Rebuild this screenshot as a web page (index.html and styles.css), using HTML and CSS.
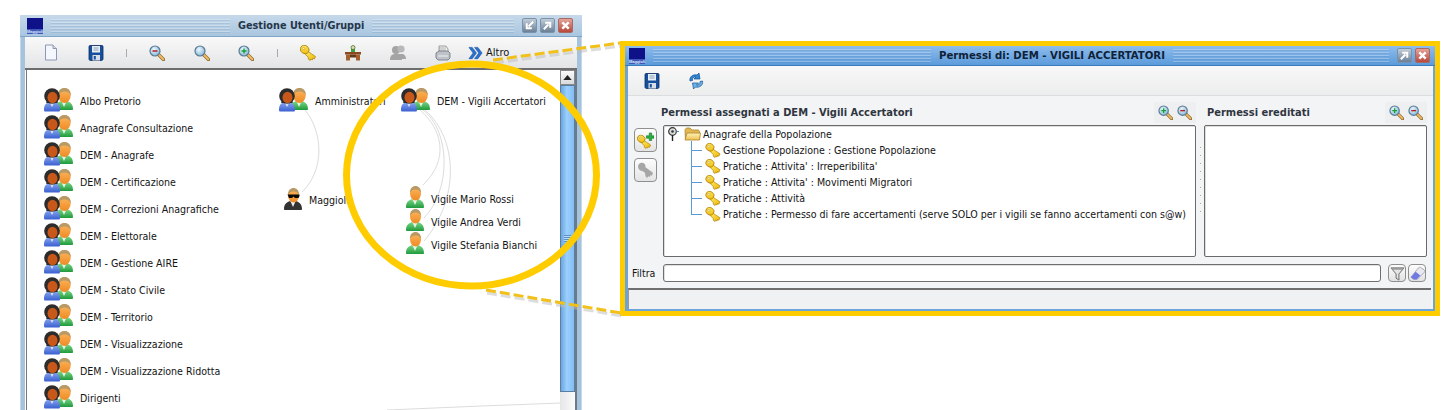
FILE: index.html
```html
<!DOCTYPE html>
<html lang="it">
<head>
<meta charset="utf-8">
<title>Gestione Utenti/Gruppi</title>
<link rel="stylesheet" href="styles.css">
</head>
<body>
<svg class="defs" width="0" height="0" aria-hidden="true">
  <defs>
    <linearGradient id="gGreen" x1="0" y1="0" x2="0" y2="1"><stop offset="0" stop-color="#7fd88a"/><stop offset="1" stop-color="#1f9a3c"/></linearGradient>
    <linearGradient id="gBlue" x1="0" y1="0" x2="0" y2="1"><stop offset="0" stop-color="#8aa8f0"/><stop offset="1" stop-color="#3a5fd0"/></linearGradient>
    <linearGradient id="gOrange" x1="0" y1="0" x2="0" y2="1"><stop offset="0" stop-color="#ffb860"/><stop offset="1" stop-color="#ee8a24"/></linearGradient>
    <linearGradient id="gGold" x1="0" y1="0" x2="1" y2="1"><stop offset="0" stop-color="#ffee70"/><stop offset="1" stop-color="#f0b400"/></linearGradient>
    <radialGradient id="gLens" cx=".4" cy=".35" r=".7"><stop offset="0" stop-color="#eef8ff"/><stop offset="1" stop-color="#7fb4d8"/></radialGradient>
    <linearGradient id="gFolder" x1="0" y1="0" x2="0" y2="1"><stop offset="0" stop-color="#fff2b8"/><stop offset="1" stop-color="#f0c050"/></linearGradient>

    <symbol id="user" viewBox="0 0 18 22">
      <path d="M0 21c0-5 3-7 6-8l3 3 3-3c3 1 6 3 6 8 0 .6-.4 1-1 1H1c-.6 0-1-.4-1-1z" fill="url(#gGreen)"/>
      <path d="M6.500 13.500 9 19l2.500-5.500L9 15z" fill="#e4f6e4"/>
      <ellipse cx="9.500" cy="7.500" rx="5.500" ry="7" fill="url(#gOrange)"/>
      <path d="M4 7C4 2 6.500 0 9.500 0S15 2 15 7c-1-2.500-3-3.500-5.500-3.500S5 4.500 4 7z" fill="#b79a66"/>
    </symbol>

    <symbol id="boss" viewBox="0 0 18 22">
      <path d="M0 21c0-5 3-7 6-8l3 3 3-3c3 1 6 3 6 8 0 .6-.4 1-1 1H1c-.6 0-1-.4-1-1z" fill="#333"/>
      <path d="M6.500 13.500 9 19l2.500-5.500L9 15z" fill="#eee"/>
      <ellipse cx="9.500" cy="7.500" rx="5.500" ry="7" fill="url(#gOrange)"/>
      <path d="M4 7C4 2 6.500 0 9.500 0S15 2 15 7c-1-2.500-3-3.500-5.500-3.500S5 4.500 4 7z" fill="#b79a66"/>
      <path d="M3.500 6.500h12v1.500l-1 2h-3.500L9.500 8.500 8 10H5z" fill="#0a0a0a"/>
    </symbol>

    <symbol id="group" viewBox="0 0 29 24">
      <g transform="translate(11 0)">
        <path d="M0 21c0-5 3-7 6-8l3 3 3-3c3 1 6 3 6 8 0 .6-.4 1-1 1H1c-.6 0-1-.4-1-1z" fill="url(#gGreen)"/>
        <path d="M6.500 13.500 9 19l2.500-5.500L9 15z" fill="#e4f6e4"/>
        <ellipse cx="9.500" cy="7.500" rx="6.200" ry="7.500" fill="url(#gOrange)"/>
        <path d="M3.300 7.500C3 2 6 0 9.500 0s6.500 2 6.200 7.500c-1-3-3.200-4-6.200-4s-5.200 1-6.200 4z" fill="#b79a66"/>
      </g>
      <path d="M0 22c0-5 2-7 5-8l3 2.500 3-2.500c3 1 5 3 5 8 0 1-.5 1.500-1.500 1.500h-13C.5 23.500 0 23 0 22z" fill="url(#gBlue)"/>
      <path d="M6 15l2 4 2-4-2 1.500z" fill="#dfe8ff"/>
      <circle cx="8" cy="8" r="7.800" fill="#2c2c2c"/>
      <path d="M2 15c1-1 .5-2 .5-3h11c0 1-.5 2 .5 3z" fill="#2c2c2c"/>
      <ellipse cx="8.500" cy="9.500" rx="5" ry="5.800" fill="#c8571a"/>
    </symbol>

    <symbol id="key" viewBox="0 0 16 16">
      <path d="M6.500 5.500 15.500 11.500l-1.200 2.500-1.500-.8-.4 1.700-1.700-.9-.5 1.500-1.800-1.300-.2-2L4.500 8.500z" fill="url(#gGold)" stroke="#a88008" stroke-width=".7"/>
      <ellipse cx="4.700" cy="4.500" rx="4.500" ry="4" transform="rotate(35 4.700 4.500)" fill="url(#gGold)" stroke="#a88008" stroke-width=".8"/>
      <ellipse cx="3.500" cy="3.600" rx="1.200" ry="1" fill="#fffbe0" stroke="#b89010" stroke-width=".5"/>
    </symbol>

    <symbol id="zoomin" viewBox="0 0 16 16">
      <path d="M9.500 9.500 14.500 14.500" stroke="#8a6a30" stroke-width="3.400" stroke-linecap="round"/>
      <path d="M9.800 9.800 14.300 14.300" stroke="#f4b860" stroke-width="2" stroke-linecap="round"/>
      <circle cx="6" cy="6" r="5" fill="url(#gLens)" stroke="#5a7a90" stroke-width="1.200"/>
      <path d="M3.500 6h5M6 3.500v5" stroke="#12a030" stroke-width="1.400"/>
    </symbol>
    <symbol id="zoomout" viewBox="0 0 16 16">
      <path d="M9.500 9.500 14.500 14.500" stroke="#8a6a30" stroke-width="3.400" stroke-linecap="round"/>
      <path d="M9.800 9.800 14.300 14.300" stroke="#f4b860" stroke-width="2" stroke-linecap="round"/>
      <circle cx="6" cy="6" r="5" fill="url(#gLens)" stroke="#5a7a90" stroke-width="1.200"/>
      <path d="M3.500 6h5" stroke="#b02020" stroke-width="1.500"/>
    </symbol>
    <symbol id="zoomfit" viewBox="0 0 16 16">
      <path d="M9.500 9.500 14.500 14.500" stroke="#8a6a30" stroke-width="3.400" stroke-linecap="round"/>
      <path d="M9.800 9.800 14.300 14.300" stroke="#f4b860" stroke-width="2" stroke-linecap="round"/>
      <circle cx="6" cy="6" r="5" fill="url(#gLens)" stroke="#5a7a90" stroke-width="1.200"/>
    </symbol>

    <symbol id="disk" viewBox="0 0 16 16">
      <path d="M1 1.500C1 1 1.500.5 2 .5h12c.5 0 1 .5 1 1V14c0 .8-.7 1.500-1.500 1.500h-11C1.700 15.500 1 14.800 1 14z" fill="#16509c" stroke="#0c2c60" stroke-width=".8"/>
      <path d="M4 1h8v6.500H4z" fill="#e8eef6"/>
      <path d="M5.500 3h5M5.500 5h5" stroke="#8aa0bc" stroke-width="1"/>
      <path d="M4.500 10h7.500v5.500H4.500z" fill="#d8dee6"/>
      <path d="M5.800 11h2v3.500h-2z" fill="#16509c"/>
    </symbol>
  </defs>
</svg>

<main class="desk">
  <section class="win win-main">
    <header class="titlebar">
      <div class="logo"><span>Maggioli</span></div>
      <div class="stripes stripes-lead"></div>
      <h1 class="title">Gestione Utenti/Gruppi</h1>
      <div class="stripes"></div>
      <div class="winbtns">
        <button class="wb"><svg viewBox="0 0 12 12"><path d="M10 2 5 7M3 3.500V9h5.500" fill="none" stroke="#fff" stroke-width="2.200"/></svg></button>
        <button class="wb"><svg viewBox="0 0 12 12"><path d="M2 10l5-5M3.500 3H9v5.500" fill="none" stroke="#fff" stroke-width="2.200"/></svg></button>
        <button class="wb wb-close"><svg viewBox="0 0 12 12"><path d="M2.500 2.500l7 7M9.500 2.500l-7 7" stroke="#fff" stroke-width="2.600"/></svg></button>
      </div>
    </header>
    <div class="toolbar toolbar-main">
      <svg class="tb tb-new" viewBox="0 0 16 16"><path d="M2.500.5H10L13.500 4v11.500h-11z" fill="#f4f7fd" stroke="#8d97b5"/><path d="M10 .5V4h3.500" fill="#d8deee" stroke="#8d97b5"/></svg>
      <svg class="tb tb-save"><use href="#disk"/></svg>
      <i class="sep sep-a"></i>
      <svg class="tb tb-z1"><use href="#zoomout"/></svg>
      <svg class="tb tb-z2"><use href="#zoomfit"/></svg>
      <svg class="tb tb-z3"><use href="#zoomin"/></svg>
      <i class="sep sep-b"></i>
      <svg class="tb tb-key"><use href="#key"/></svg>
      <svg class="tb tb-desk" viewBox="0 0 16 16"><path d="M6 4h4v3H6z" fill="#3aa040"/><circle cx="8" cy="2.500" r="2" fill="#e8d8b0" stroke="#3a7a30" stroke-width=".8"/><path d="M0 7h16v2.500H0z" fill="#8a4a20"/><path d="M1 9.500h4v6H1zM11 9.500h4v6h-4z" fill="#a4602c"/><path d="M5 9.500h6v3H5z" fill="#6a3814"/></svg>
      <svg class="tb tb-grp" viewBox="0 0 16 16"><circle cx="6" cy="5" r="4" fill="#a4a4a4"/><circle cx="11" cy="4" r="3.600" fill="#b8b8b8"/><path d="M0 15c0-4 2-6 5-6h3c2 0 4 2 4 6zM9 9h3c2 0 4 1.500 4 5H12z" fill="#a4a4a4"/></svg>
      <svg class="tb tb-print" viewBox="0 0 16 16"><path d="M4 1h7l2 3v4H4z" fill="#f2f2f2" stroke="#888" stroke-width=".8"/><path d="M4 3h7M4 5h7" stroke="#888" stroke-width=".6"/><path d="M1 8l3-2h9l2 2v5l-2 2H3l-2-2z" fill="#bcc2c8" stroke="#6c7278" stroke-width=".8"/><path d="M3 11h10" stroke="#f2f2f2"/></svg>
      <div class="altro">
        <svg class="tb-more" viewBox="0 0 16 14"><path d="M1 1h3.500l4.500 6-4.500 6H1l4.500-6zM7 1h3.500l4.500 6-4.500 6H7l4.500-6z" fill="#2a72d0" stroke="#124a9a" stroke-width=".6"/></svg>
        <span>Altro</span>
      </div>
    </div>
    <div class="work">
      <div class="canvas">
        <svg class="edges" viewBox="0 0 534 340">
          <path d="M278 40C296 62 298 100 275 122"/>
          <path d="M393 40C416 60 422 90 396 115"/>
          <path d="M396 40C424 62 424 120 397 148"/>
          <path d="M398 40C432 70 432 130 397 171"/>
          <path d="M360 340Q450 336 534 333"/>
        </svg>
        <ul class="col col-groups">
          <li class="node"><svg class="ic-group"><use href="#group"/></svg><span>Albo Pretorio</span></li>
          <li class="node"><svg class="ic-group"><use href="#group"/></svg><span>Anagrafe Consultazione</span></li>
          <li class="node"><svg class="ic-group"><use href="#group"/></svg><span>DEM - Anagrafe</span></li>
          <li class="node"><svg class="ic-group"><use href="#group"/></svg><span>DEM - Certificazione</span></li>
          <li class="node"><svg class="ic-group"><use href="#group"/></svg><span>DEM - Correzioni Anagrafiche</span></li>
          <li class="node"><svg class="ic-group"><use href="#group"/></svg><span>DEM - Elettorale</span></li>
          <li class="node"><svg class="ic-group"><use href="#group"/></svg><span>DEM - Gestione AIRE</span></li>
          <li class="node"><svg class="ic-group"><use href="#group"/></svg><span>DEM - Stato Civile</span></li>
          <li class="node"><svg class="ic-group"><use href="#group"/></svg><span>DEM - Territorio</span></li>
          <li class="node"><svg class="ic-group"><use href="#group"/></svg><span>DEM - Visualizzazione</span></li>
          <li class="node"><svg class="ic-group"><use href="#group"/></svg><span>DEM - Visualizzazione Ridotta</span></li>
          <li class="node"><svg class="ic-group"><use href="#group"/></svg><span>Dirigenti</span></li>
        </ul>
        <div class="node free n-admin"><svg class="ic-group"><use href="#group"/></svg><span>Amministratori</span></div>
        <div class="node free n-dem"><svg class="ic-group"><use href="#group"/></svg><span>DEM - Vigili Accertatori</span></div>
        <div class="node free n-magg"><svg class="ic-user"><use href="#boss"/></svg><span>Maggioli</span></div>
        <div class="col-users">
          <div class="node unode"><svg class="ic-user"><use href="#user"/></svg><span>Vigile Mario Rossi</span></div>
          <div class="node unode"><svg class="ic-user"><use href="#user"/></svg><span>Vigile Andrea Verdi</span></div>
          <div class="node unode"><svg class="ic-user"><use href="#user"/></svg><span>Vigile Stefania Bianchi</span></div>
        </div>
      </div>
      <div class="scrollbar">
        <div class="sb-up"><svg viewBox="0 0 10 6"><path d="M5 0l5 6H0z" fill="#222"/></svg></div>
        <div class="sb-thumb"><div class="grip"></div></div>
        <div class="sb-track"></div>
      </div>
    </div>
  </section>

  <section class="frame">
    <div class="win win-perm">
      <header class="titlebar titlebar-on">
        <div class="logo"><span>Maggioli</span></div>
        <div class="stripes stripes-lead"></div>
        <h1 class="title">Permessi di: DEM - VIGILI ACCERTATORI</h1>
        <div class="stripes"></div>
        <div class="winbtns">
          <button class="wb"><svg viewBox="0 0 12 12"><path d="M2 10l5-5M3.500 3H9v5.500" fill="none" stroke="#fff" stroke-width="2.200"/></svg></button>
          <button class="wb wb-close"><svg viewBox="0 0 12 12"><path d="M2.500 2.500l7 7M9.500 2.500l-7 7" stroke="#fff" stroke-width="2.600"/></svg></button>
        </div>
      </header>
      <div class="toolbar toolbar-perm">
        <svg class="tb"><use href="#disk"/></svg>
        <svg class="tb" viewBox="0 0 16 16"><path d="M2 8C1 4 5 1 9 2l2-2 1 6-6 0 2-2C6 3.500 4 5 4.500 7.500z" fill="#2f86d8" stroke="#14508f" stroke-width=".7"/><path d="M14.500 8c1 4-3 7-7 6l-2 2-1-6 6 0-2 2c2 .5 4-1 3.500-3.500z" fill="#6cb4ec" stroke="#14508f" stroke-width=".7"/></svg>
      </div>
      <div class="perm-body">
        <div class="panels">
          <div class="sidebtns">
            <button class="pbtn"><svg viewBox="0 0 18 18"><use href="#key" width="15" height="15" y="3"/><path d="M10 4h3V1h2.500v3H18v2.500h-2.500V9H13V6.500h-3z" fill="#28b040" stroke="#0e7020" stroke-width=".6"/></svg></button>
            <button class="pbtn"><svg viewBox="0 0 16 16"><path d="M1 4.500C1 2 3 .5 5 .8 7 1.100 8.500 3 8 5l7 5-1 3-1.500-.5-.5 1.500-1.500-.5L9.500 15 8 13.500 7.500 10 5 8.500C3 8.500 1 7 1 4.500z" fill="#a6a6a6"/></svg></button>
          </div>
          <div class="panel panel-left">
            <div class="phead">
              <h2>Permessi assegnati a DEM - Vigili Accertatori</h2>
              <div class="zooms"><svg><use href="#zoomin"/></svg><svg><use href="#zoomout"/></svg></div>
            </div>
            <div class="box tree">
              <div class="troot">
                <svg class="pin" viewBox="0 0 11 14"><circle cx="4.500" cy="4.500" r="3.800" fill="#ddd" stroke="#333" stroke-width="1.200"/><circle cx="4.500" cy="4.500" r="1.300" fill="#333"/><path d="M4.500 8v6" stroke="#222" stroke-width="1.400"/><path d="M8.500 4.500H11" stroke="#4a90d0"/></svg>
                <svg class="folder" viewBox="0 0 17 14"><path d="M1 3.500C1 2 2 1 3 1h3l2 2h6c1 0 1.500 1 1.500 2v7.500h-14z" fill="#e4b850" stroke="#a88430" stroke-width=".8"/><path d="M1 13l2-7h13.500l-1 7z" fill="url(#gFolder)" stroke="#a88430" stroke-width=".8"/></svg>
                <span>Anagrafe della Popolazione</span>
              </div>
              <ul class="tkids">
                <li><svg class="key"><use href="#key"/></svg><span>Gestione Popolazione : Gestione Popolazione</span></li>
                <li><svg class="key"><use href="#key"/></svg><span>Pratiche : Attivita' : Irreperibilita'</span></li>
                <li><svg class="key"><use href="#key"/></svg><span>Pratiche : Attivita' : Movimenti Migratori</span></li>
                <li><svg class="key"><use href="#key"/></svg><span>Pratiche : Attività</span></li>
                <li><svg class="key"><use href="#key"/></svg><span>Pratiche : Permesso di fare accertamenti (serve SOLO per i vigili se fanno accertamenti con s@w)</span></li>
              </ul>
            </div>
          </div>
          <div class="splitter"></div>
          <div class="panel panel-right">
            <div class="phead">
              <h2>Permessi ereditati</h2>
              <div class="zooms"><svg><use href="#zoomin"/></svg><svg><use href="#zoomout"/></svg></div>
            </div>
            <div class="box"></div>
          </div>
        </div>
        <div class="filter">
          <label class="flabel" for="f">Filtra</label>
          <input class="finput" id="f" type="text">
          <div class="fbtns">
            <button class="fbtn"><svg viewBox="0 0 16 16"><path d="M1 2h14L9.500 8.500V15l-3-2V8.500z" fill="#e4e4e4" stroke="#666" stroke-width="1"/><path d="M1 2h14l-2 2H3z" fill="#9a9a9a"/></svg></button>
            <button class="fbtn"><svg viewBox="0 0 16 16"><path d="M1 12 9 2c1-1 2-1 3 0l3 2c1 1 1 2 0 3l-7 7H4z" fill="#e8e8ee" stroke="#8a8aa0" stroke-width=".7"/><path d="M1 12l5-6 5 4-4 4.500H4z" fill="#7078e4"/></svg></button>
          </div>
        </div>
        <div class="statusbar"></div>
      </div>
    </div>
  </section>

  <svg class="callout" viewBox="0 0 1456 410">
    <g class="dash-shadow">
      <path d="M494 63 621 46"/>
      <path d="M487 293 622 316"/>
    </g>
    <g class="dash">
      <path d="M493 60 620 43"/>
      <path d="M486 290 621 313"/>
    </g>
    <ellipse class="ring" cx="471.500" cy="175" rx="125" ry="111"/>
  </svg>
</main>
</body>
</html>
```
FILE: styles.css
```css
* { box-sizing: border-box; }
html, body { margin: 0; padding: 0; background: #fff; }
body {
  font-family: "DejaVu Sans", "Liberation Sans", sans-serif;
  font-stretch: condensed;
  font-size: 10.560px;
  color: #141414;
  overflow: hidden;
}
.defs { position: absolute; }
.desk { position: relative; width: 1456px; height: 410px; overflow: hidden; }
ul { list-style: none; margin: 0; padding: 0; }
h1, h2 { margin: 0; }
button { padding: 0; margin: 0; font: inherit; }

/* windows */
.win { display: flex; flex-direction: column; }
.win-main {
  position: absolute;
  left: 20px; top: 15px;
  width: 562px; height: 420px;
  background: #a6c3dd;
  border-radius: 2px 2px 0 0;
  padding: 0 5px 0 5px;
  box-shadow: inset 1px 0 #c4d8ea, inset -1px 0 #c4d8ea;
}
.frame {
  position: absolute;
  left: 620px; top: 41px;
  width: 820px; height: 275px;
  border: 5px solid #ffcc00;
  display: flex;
}
.win-perm {
  flex: 1;
  background: #6ba3da;
  padding: 0 2px 2px 3px;
  min-width: 0;
}

/* title bars */
.titlebar {
  display: flex;
  align-items: center;
  height: 22px;
  flex: none;
  margin: 0 -5px;
  padding: 0 9px 0 7px;
  background: linear-gradient(#c6d9ea, #a9c6df);
  border-bottom: 1px solid #7fa5c7;
}
.titlebar-on {
  height: 20px;
  margin: 0 -2px 0 -3px;
  padding: 0 5px 0 4px;
  background: linear-gradient(#8fbcec, #5b9bdb);
  border-bottom: 1px solid #3a7cbe;
}
.logo {
  width: 16px; height: 16px;
  flex: none;
  background: linear-gradient(#0f1188 70%, #3f58b8 70%);
  display: flex;
  align-items: flex-end;
  justify-content: center;
}
.logo span {
  font-size: 4px;
  line-height: 5px;
  color: #dfe8ff;
  font-family: "Liberation Sans", sans-serif;
  font-weight: bold;
}
.stripes {
  flex: 1;
  height: 14px;
  margin: 0 8px;
  background: repeating-linear-gradient(rgba(255,255,255,.28) 0 1px, rgba(60,100,150,.14) 1px 2px, transparent 2px 3px);
}
.stripes-lead { flex: none; width: 179px; }
.titlebar-on .stripes-lead { width: 278px; }
.title {
  font-size: 10.800px;
  font-weight: bold;
  color: #26364a;
  white-space: nowrap;
}
.titlebar-on .title { color: #0f2238; font-size: 11.300px; }
.winbtns { display: flex; gap: 3px; flex: none; }
.wb {
  width: 15px; height: 15px;
  border: 1px solid #7a93ab;
  border-radius: 2px;
  background: linear-gradient(#c0ccd8, #6c8096);
  display: flex; align-items: center; justify-content: center;
}
.wb svg { width: 11px; height: 11px; }
.wb-close { background: linear-gradient(#e4a498, #b8483c); border-color: #a86a64; }

/* toolbars */
.toolbar {
  position: relative;
  flex: none;
  display: flex;
  align-items: center;
  background: linear-gradient(#f9f9f9, #e3e4e6);
}
.toolbar-main {
  height: 33px;
  border-bottom: 2px solid #6d6d6d;
  padding-left: 18px;
  margin-top: 0;
}
.tb { width: 16px; height: 16px; flex: none; }
.tb-new { width: 16px; height: 17px; }
.tb-save { margin-left: 29px; }
.sep { width: 1px; height: 8px; background: #aaa; flex: none; }
.sep-a { margin-left: 22px; }
.tb-z1 { margin-left: 22px; }
.tb-z2 { margin-left: 29px; }
.tb-z3 { margin-left: 28px; }
.sep-b { margin-left: 23px; }
.tb-key { margin-left: 22px; }
.tb-desk { margin-left: 29px; }
.tb-grp { margin-left: 29px; }
.tb-print { margin-left: 29px; }
.altro { display: flex; align-items: center; gap: 3px; margin-left: 17px; font-size: 11px; }
.tb-more { width: 15px; height: 14px; }

.toolbar-perm {
  height: 30px;
  padding-left: 16px;
  gap: 28px;
  border-bottom: 1px solid #dcdde0;
  background: linear-gradient(#f8f8f9, #eceded);
}

/* main work area */
.work { flex: 1; display: flex; min-height: 0; background: #fff; }
.canvas {
  position: relative;
  flex: 1;
  margin-left: 1px;
  border-left: 1px solid #777;
  background: #fff;
  overflow: hidden;
}
.edges { position: absolute; left: 0; top: 0; width: 534px; height: 340px; }
.edges path { fill: none; stroke: #dcdcdc; stroke-width: 1; }
.node { display: flex; align-items: center; gap: 7px; white-space: nowrap; }
.node span { padding-top: 2px; }
.col { position: absolute; left: 17px; top: 16px; display: flex; flex-direction: column; }
.col .node { height: 27px; }
.ic-group { width: 29px; height: 24px; flex: none; }
.ic-user { width: 18px; height: 22px; flex: none; }
.free { position: absolute; height: 27px; }
.n-admin { left: 252px; top: 16px; }
.n-dem { left: 374px; top: 16px; }
.n-magg { left: 257px; top: 115px; gap: 7px; }
.col-users { position: absolute; left: 379px; top: 115px; display: flex; flex-direction: column; }
.unode { height: 23px; gap: 7px; }
.unode span { padding-top: 4px; }

.scrollbar {
  width: 17px;
  flex: none;
  display: flex;
  flex-direction: column;
  background: #e8ecf0;
  border-right: 2px solid #6c7a88;
}
.sb-up {
  height: 15px;
  flex: none;
  background: linear-gradient(#fafafa, #d8dadc);
  border: 1px solid #888;
  display: flex; align-items: center; justify-content: center;
}
.sb-up svg { width: 9px; height: 5px; }
.sb-thumb {
  height: 307px;
  flex: none;
  background: linear-gradient(90deg, #6ba6de, #9bd0ff 45%, #83bdf3);
  border: 1px solid #5a7da0;
  display: flex; align-items: center; justify-content: center;
}
.grip {
  width: 7px; height: 7px;
  background: repeating-linear-gradient(#5a90c8 0 1px, #b8dcff 1px 2px);
}
.sb-track { flex: 1; background: linear-gradient(90deg, #e6e6e6, #fbfbfb); }

/* permissions window */
.perm-body {
  flex: 1;
  min-height: 0;
  display: flex;
  flex-direction: column;
  background: #f3f4f6;
}
.panels { display: flex; height: 161px; flex: none; }
.sidebtns {
  width: 35px;
  flex: none;
  display: flex;
  flex-direction: column;
  gap: 6px;
  padding: 32px 0 0 6px;
}
.pbtn {
  width: 23px; height: 24px;
  border: 1px solid #8f8f8f;
  border-radius: 4px;
  background: linear-gradient(#fdfdfd, #e4e4e4);
  display: flex; align-items: center; justify-content: center;
}
.pbtn svg { width: 17px; height: 17px; }
.panel { display: flex; flex-direction: column; }
.panel-left { width: 533px; flex: none; }
.panel-right { width: 223px; flex: none; }
.phead {
  height: 29px;
  flex: none;
  display: flex;
  align-items: center;
  justify-content: space-between;
  padding-top: 4px;
}
.phead h2 {
  font-size: 11px;
  font-weight: bold;
  color: #2f3640;
  white-space: nowrap;
  margin-left: -2px;
}
.panel-right .phead h2 { margin-left: 3px; }
.zooms {
  display: flex;
  gap: 4px;
  padding: 0 4px;
  height: 21px;
  align-items: center;
  background: #eeeff1;
}
.zooms svg { width: 15px; height: 15px; }
.box {
  flex: 1;
  background: #fff;
  border: 1px solid #6a6a6a;
  border-radius: 2px;
  box-shadow: inset 1px 1px 0 #ddd;
}
.tree { padding: 0 0 0 4px; white-space: nowrap; }
.troot { display: flex; align-items: center; height: 16px; }
.pin { width: 11px; height: 14px; flex: none; }
.folder { width: 17px; height: 14px; flex: none; margin-left: 5px; margin-right: 2px; }
.tkids {
  position: relative;
  margin-left: 23px;
  padding-left: 12px;
}
.tkids::before {
  content: "";
  position: absolute;
  left: 0; top: -1px;
  bottom: 7px;
  border-left: 1px solid #5b9bd5;
}
.tkids li { position: relative; display: flex; align-items: center; height: 16px; gap: 2px; }
.tkids li::before {
  content: "";
  position: absolute;
  left: -12px; top: 8px;
  width: 11px;
  border-top: 1px solid #5b9bd5;
}
.key { width: 16px; height: 15px; flex: none; margin-left: 2px; }
.splitter {
  width: 8px;
  flex: none;
  margin-top: 46px;
  height: 76px;
  background: repeating-linear-gradient(transparent 0 5px, #a8a8a8 5px 6px, transparent 6px 8px) center / 1px 100% no-repeat;
}
.filter {
  display: flex;
  align-items: center;
  height: 18px;
  margin-top: 7px;
  flex: none;
}
.flabel { width: 35px; padding-left: 4px; flex: none; }
.finput {
  width: 718px;
  height: 18px;
  flex: none;
  border: 1px solid #6f6f6f;
  border-radius: 3px;
  background: #fff;
  box-shadow: inset 1px 1px 0 #e0e0e0;
  padding: 0;
}
.fbtns { display: flex; gap: 2px; margin-left: 7px; }
.fbtn {
  width: 18px; height: 18px;
  border: 1px solid #8f8f8f;
  border-radius: 4px;
  background: linear-gradient(#fdfdfd, #e2e2e2);
  display: flex; align-items: center; justify-content: center;
}
.fbtn svg { width: 15px; height: 15px; }
.statusbar {
  flex: 1;
  margin: 6px 2px 0 0;
  border-top: 2px solid #6f6f6f;
  border-left: 1px solid #9a9a9a;
  background: #f0f1f3;
}

/* callout annotation */
.callout { position: absolute; left: 0; top: 0; width: 1456px; height: 410px; pointer-events: none; }
.ring { fill: none; stroke: #ffcc00; stroke-width: 7; }
.dash path { fill: none; stroke: #f1c01a; stroke-width: 3; stroke-dasharray: 10 4; }
.dash-shadow path { fill: none; stroke: #bbb; stroke-width: 3; stroke-dasharray: 10 4; opacity: .5; }
```
